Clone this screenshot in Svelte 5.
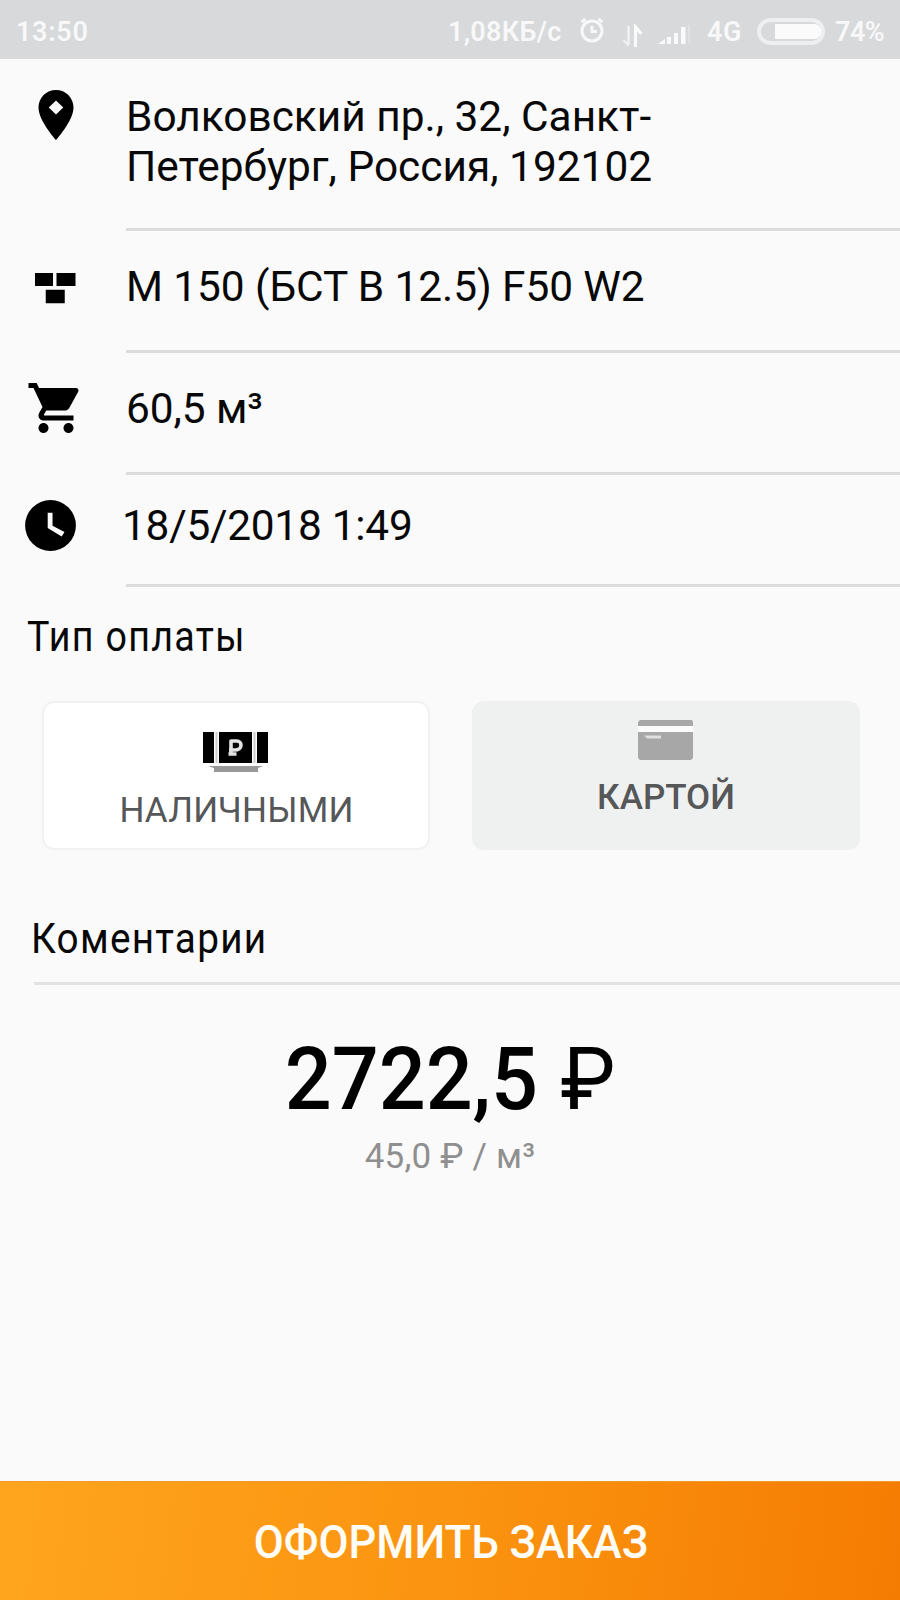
<script>
  const pin = 'M12 2C8.1 2 5 5.1 5 9c0 5.3 7 13 7 13s7-7.700 7-13c0-3.900-3.100-7-7-7zm0 9.800L9.100 9 12 6.200 14.900 9z';
  const bricks = 'M4 9.200h7.200v5.200H4zM12.600 9.200h7.600v5.200h-7.600zM8.300 15.900h7.600v5.400H8.300z';
  const cart = 'M7 18c-1.100 0-1.990.9-1.990 2S5.900 22 7 22s2-.9 2-2-.9-2-2-2zM1 2v2h2l3.600 7.590-1.350 2.450c-.16.28-.25.61-.25.960 0 1.100.9 2 2 2h12v-2H7.420c-.14 0-.25-.11-.25-.25l.03-.12.9-1.630h7.450c.75 0 1.410-.41 1.750-1.030l3.580-6.490A1.003 1.003 0 0 0 20 4H5.210l-.94-2H1zm16 16c-1.100 0-1.990.9-1.990 2s.89 2 1.990 2 2-.9 2-2-.9-2-2-2z';
  const clock = 'M12 2a10 10 0 1 0 0 20 10 10 0 0 0 0-20zm4.400 14.300L10.900 13V7h1.900v5.100l4.700 2.500z';

  const rows = [
    { key: 'address', icon: pin, lines: ['Волковский пр., 32, Санкт-', 'Петербург, Россия, 192102'] },
    { key: 'grade', icon: bricks, lines: ['М 150 (БСТ В 12.5) F50 W2'] },
    { key: 'volume', icon: cart, lines: ['60,5 м³'] },
    { key: 'date', icon: clock, lines: ['18/5/2018 1:49'] },
  ];

  let payment = 'cash';
</script>

<div class="screen">
  <header class="status">
    <span class="time">13:50</span>
    <span class="speed">1,08КБ/с</span>
    <svg class="alarm" width="26" height="28" viewBox="0 0 26 28" fill="none" stroke="#f8f8f8" stroke-width="3">
      <circle cx="13" cy="15" r="10" />
      <path d="M13 10v5.500h5M2.500 6l4-3M23.500 6l-4-3" />
    </svg>
    <svg class="arrows" width="22" height="24" viewBox="0 0 22 24" fill="none" stroke="#fafafa">
      <path d="M6.500 2v19M1.500 16l5 5.500" stroke-width="2.400" opacity=".75" />
      <path d="M13.500 23V3l6 7" stroke-width="3.200" />
    </svg>
    <svg class="signal" width="34" height="20" viewBox="0 0 34 20" fill="#fafafa">
      <path d="M1 19l7-5v5zM10 12h4v7h-4zM17 8h4v11h-4zM24 2h4.500v17H24z" />
      <path d="M31 0h2v19h-2z" opacity=".25" />
    </svg>
    <span class="net">4G</span>
    <svg class="battery" width="68" height="27" viewBox="0 0 68 27">
      <rect x="2" y="2" width="64" height="23" rx="11.500" fill="none" stroke="#eeeff0" stroke-width="4" />
      <path d="M18 6h39a7.500 7.500 0 0 1 0 15H18z" fill="#fbfbfb" />
    </svg>
    <span class="percent">74%</span>
  </header>

  <main>
    {#each rows as row}
      <section class="row {row.key}">
        <div class="icon">
          <svg viewBox="0 0 24 24"><path d={row.icon} fill-rule="evenodd" /></svg>
        </div>
        <div class="value">
          {#each row.lines as line}<div>{line}</div>{/each}
        </div>
      </section>
    {/each}

    <h2 class="pay-title"><span>Тип оплаты</span></h2>
    <div class="options">
      <button class="option cash" class:active={payment === 'cash'} on:click={() => (payment = 'cash')}>
        <svg width="66" height="42" viewBox="0 0 66 42">
          <path d="M0 0h11v31H0zM16 0h33v31H16zM54 0h11v31H54z" />
          <path d="M13.500 0v31M51.500 0v31" stroke="#ccc" stroke-width="2" />
          <path d="M5 34h55l-5 2v4H11v-4z" fill="#999" />
          <path d="M28 22V9h6a4 4 0 0 1 4 4c0 3.500-3 5-6 5h-6M25.500 22h8" fill="none" stroke="#e2e2e2" stroke-width="3.600" stroke-linejoin="round" />
        </svg>
        <span>НАЛИЧНЫМИ</span>
      </button>
      <button class="option card" class:active={payment === 'card'} on:click={() => (payment = 'card')}>
        <svg width="56" height="41" viewBox="0 0 56 41" fill="#a7a7a7">
          <path d="M2 0h52l1 2v4H0V2z" />
          <path d="M0 6h55v6H0z" fill="#fbfbfb" />
          <path d="M0 12h55v26l-2 2H2l-2-2z" />
          <path d="M6 15.500h17v3H9z" fill="#dedfdf" />
        </svg>
        <span>КАРТОЙ</span>
      </button>
    </div>

    <div class="comment"><span>Коментарии</span></div>

    <div class="price"><span>2722,5 <i>₽</i></span></div>
    <div class="unit">45,0 ₽ / м³</div>
  </main>

  <button class="submit"><span>ОФОРМИТЬ ЗАКАЗ</span></button>
</div>

<style>
  :global(body) { margin: 0; background: #fafafa; }
  .screen {
    width: 900px; height: 1600px; display: flex; flex-direction: column;
    overflow: hidden; background: #fafafa; color: #080808;
    font-family: Roboto, sans-serif;
  }
  svg { display: block; flex: none; }
  button { border: 0; margin: 0; padding: 0; font-family: inherit; box-sizing: border-box; }

  .status {
    flex: none; height: 59px; box-sizing: border-box; padding: 0 0 0 16px;
    display: flex; align-items: flex-start; background: #d7d9db;
    color: #f8f8f8; font-size: 27px; font-weight: 600; line-height: 32px; white-space: nowrap;
  }
  .status span { flex: none; margin-top: 16px; }
  .time { width: 432px; letter-spacing: .7px; }
  .speed { width: 131px; letter-spacing: .3px; }
  .alarm { margin: 16px 17px 0 0; }
  .arrows { margin: 24px 13px 0 0; }
  .signal { margin: 25px 16px 0 0; }
  .net { width: 50px; letter-spacing: .5px; }
  .battery { margin: 18px 10px 0 0; }
  .percent { letter-spacing: -.5px; }

  main { flex: 1; display: flex; flex-direction: column; }
  .row { flex: none; display: flex; height: 122px; }
  .icon { width: 126px; box-sizing: border-box; padding: 25px 0 0 25.500px; }
  .icon svg { width: 60px; height: 60px; }
  .value {
    flex: 1; box-sizing: border-box; padding-top: 31px; border-bottom: 3px solid #dcdcdc;
    font-size: 42.400px; line-height: 50px; letter-spacing: -.08px; white-space: nowrap;
  }
  .address { height: 172px; }
  .address .icon { padding-top: 26px; }
  .address .value { padding-top: 33px; line-height: 49.500px; letter-spacing: 0; }
  .grade .icon { padding: 19px 0 0 25px; }
  .volume .value { text-indent: 0; }
  .date { height: 112px; }
  .date .icon { padding: 20px 0 0 20px; }
  .date .icon svg { width: 61px; height: 61px; }
  .date .value { padding-top: 26px; text-indent: -4px; letter-spacing: -.25px; }

  h2, .comment { margin: 0; font-size: 43px; font-weight: 400; line-height: 50px; }
  .pay-title { padding: 24px 0 0 27px; }
  .pay-title span, .comment span {
    display: inline-block; transform-origin: left; transform: scaleX(.875); letter-spacing: 1.500px;
  }
  .comment span { transform: scaleX(.9); letter-spacing: 1.400px; }

  .options { display: grid; grid-template-columns: 388px 388px; gap: 42px; padding: 40px 0 0 42px; }
  .option {
    height: 149px; display: flex; flex-direction: column; align-items: center;
    border: 2px solid #eff1f1; border-radius: 12px; background: #eff1f1;
    color: #555759; font-size: 35px; line-height: 40px;
  }
  .option.active { background: #fff; border-color: #f1f1f1; }
  .cash { padding-top: 29px; letter-spacing: .2px; }
  .cash span { margin: 17px 0 0 1px; }
  .card { padding-top: 17px; font-weight: 500; }
  .card span { margin-top: 17px; }

  .comment { margin: 63px 0 0 34px; height: 69px; border-bottom: 3px solid #e2e2e2; }
  .comment span { margin-left: -3px; }

  .price { margin-top: 44px; height: 100px; text-align: center; font-size: 87px; font-weight: 500; line-height: 100px; color: #000; }
  .price span { display: inline-block; transform: scaleX(.95); }
  .price i { font-style: normal; font-weight: 400; margin-left: 2px; }
  .unit { margin-top: 8px; text-align: center; font-size: 35px; line-height: 40px; letter-spacing: .2px; color: #8f8f8f; }

  .submit {
    flex: none; height: 119px; padding-top: 4px; color: #fffdf5;
    background: linear-gradient(97deg, #ffa51d, #fb9410 50%, #f57c02);
    border-top: 1px solid #f09a2c; font-size: 45.500px; font-weight: 500; line-height: 54px;
  }
  .submit span { display: inline-block; transform: scaleX(.957); margin-left: 2px; }
</style>
